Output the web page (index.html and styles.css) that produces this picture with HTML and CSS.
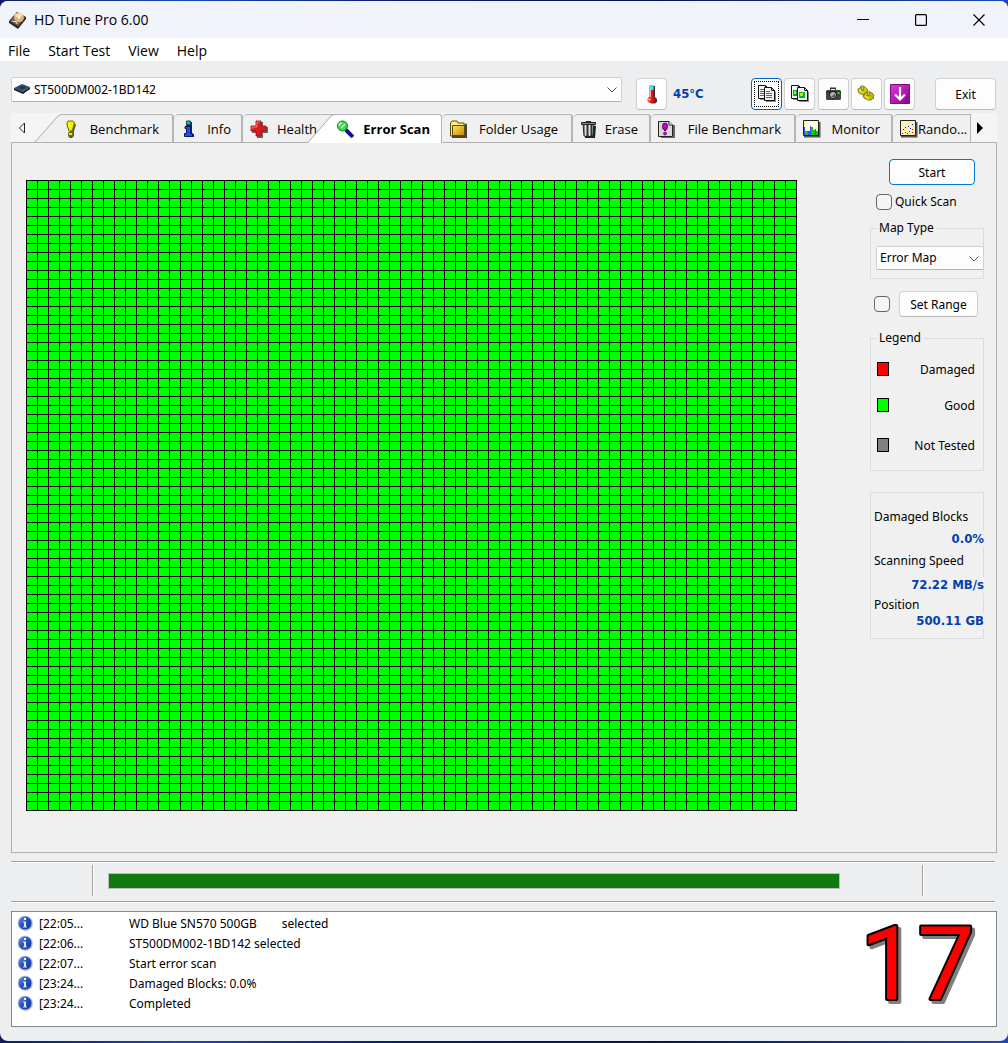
FILE: index.html
```html
<!DOCTYPE html>
<html lang="en">
<head>
<meta charset="utf-8">
<title>HD Tune Pro 6.00</title>
<link rel="stylesheet" href="styles.css">
</head>
<body>
<svg class="defs" aria-hidden="true">
  <defs>
    <linearGradient id="ball" x1="0" y1="0" x2="1" y2="1"><stop offset="0" stop-color="#6f97ee"/><stop offset=".5" stop-color="#2450c0"/><stop offset="1" stop-color="#16308c"/></linearGradient>
    <linearGradient id="purple" x1="0" y1="0" x2="1" y2="1"><stop offset="0" stop-color="#dc3cdc"/><stop offset="1" stop-color="#8c008c"/></linearGradient>
    <linearGradient id="gold" x1="0" y1="0" x2="1" y2="1"><stop offset="0" stop-color="#ffe860"/><stop offset="1" stop-color="#c08a00"/></linearGradient>
    <linearGradient id="tube" x1="0" y1="0" x2="1" y2="0"><stop offset="0" stop-color="#ff4030"/><stop offset="1" stop-color="#c00000"/></linearGradient>
    <symbol id="info-ball" viewBox="0 0 16 16"><circle cx="8.500" cy="8.700" r="7.200" fill="#b4b4bc"/><circle cx="8" cy="8" r="7" fill="url(#ball)" stroke="#c4cae0" stroke-width=".8"/><path d="M7 3h2v2H7z" fill="#fff"/><path d="M6 6.500h3V12H7V7.500H6z" fill="#e8ecfa"/><path d="M6 11.500h4v1H6z" fill="#c8d2f2"/></symbol>
    <symbol id="sheet" viewBox="0 0 12 15"><path d="M2 2h7l3 3v10H2z" fill="#888"/><path d="M.5.5h7l3 3v10H.5z" fill="#f5f5f5" stroke="#111"/><path d="M7.500.5v3h3" fill="none" stroke="#111"/></symbol>
  </defs>
</svg>
<main class="window">
  <header class="titlebar">
    <svg class="app-icon" viewBox="0 0 18 18"><path d="m0 10 8-9 9 5v2l-8 10-9-6z" fill="#2c2a2a"/><path d="m1 10 7-8 8 4-7 9z" fill="#6b6562"/><ellipse cx="10" cy="6.500" rx="5" ry="4.800" fill="#e6ae66"/><path d="M5.500 5c2-4 7-3.500 8.500-1L10 7z" fill="#f9dfb4"/><circle cx="10" cy="6.500" r="1.400" fill="#fff"/><path d="m3.500 10.500 3 0 2 2.500" stroke="#ddd" stroke-width="1.200" fill="none"/></svg>
    <h1 class="title">HD Tune Pro 6.00</h1>
    <button class="caption" aria-label="Minimize"><svg viewBox="0 0 12 12"><path d="M0 5.500h12" stroke="#000"/></svg></button>
    <button class="caption" aria-label="Maximize"><svg viewBox="0 0 12 12"><rect x=".6" y=".6" width="10.800" height="10.800" rx="1" fill="none" stroke="#000" stroke-width="1.200"/></svg></button>
    <button class="caption" aria-label="Close"><svg viewBox="0 0 12 12"><path d="m.5.5 11 11M11.500.5l-11 11" stroke="#000" stroke-width="1.100"/></svg></button>
  </header>
  <nav class="menubar">
    <button>File</button><button>Start Test</button><button>View</button><button>Help</button>
  </nav>

  <div class="toolbar">
    <div class="combo drive">
      <svg class="drive-icon" viewBox="0 0 16 10"><path d="m0 4 8-4 8 3-7 5z" fill="#34506c"/><path d="m0 4 9 4 7-5v2l-7 5-9-4z" fill="#101820"/><path d="m4 4 4-2 4 1-3 2z" fill="#17355c"/></svg>
      <select aria-label="Drive"><option>ST500DM002-1BD142</option></select>
      <svg class="chevron" viewBox="0 0 10 6"><path d="m.5.5 4.500 4.500L9.500.5" fill="none" stroke="#555"/></svg>
    </div>
    <button class="tool temp" aria-label="Temperature"><svg viewBox="0 0 20 20"><path d="M9 2h4v11l2 2v3l-2 1.500H9z" fill="#333"/><path d="M7.500 1.500h4v11l2 2v2.500l-2 2h-4l-2-2v-2.500l2-2z" fill="url(#tube)"/><path d="M7.500 1.500h4V6h-4z" fill="#58dce4"/><path d="M8.500 6v7" stroke="#ffb0a8"/><path d="M6.500 15.500h2" stroke="#fff" stroke-width="1.500"/></svg></button>
    <output class="degrees">45°C</output>
    <div class="tools">
      <button class="tool focused" aria-label="Copy text"><svg viewBox="0 0 20 20"><use href="#sheet" x="1" y="1" width="12" height="15"/><path d="M3 5.500h4M3 7.500h5M3 9.500h5M3 11.500h5" stroke="#0878d8"/><use href="#sheet" x="7" y="3" width="12" height="15"/><path d="M9 7.500h4M9 9.500h6M9 11.500h6M9 13.500h6" stroke="#0878d8"/></svg></button>
      <button class="tool" aria-label="Copy image"><svg viewBox="0 0 20 20"><use href="#sheet" x="1" y="1" width="12" height="15"/><path d="M3 6h4v6H3z" fill="#00a838"/><path d="M4 7h2v3H4z" fill="#e7d300"/><use href="#sheet" x="7" y="3" width="12" height="15"/><path d="M9 8h6v6H9z" fill="#00b83c"/><path d="M10 9h3v3h-3z" fill="#f0d800"/><path d="M13 11h1v2h-1z" fill="#1676d2"/></svg></button>
      <button class="tool" aria-label="Save screenshot"><svg viewBox="0 0 20 20"><path d="M7 3.500h6V7h-1V5H8v2H7z" fill="#333"/><rect x="3" y="6" width="15" height="10" rx="1.500" fill="#444"/><path d="M3 8h15" stroke="#222"/><circle cx="10" cy="11" r="3.500" fill="#bbb" stroke="#111"/><path d="m8 13 4-3.500V13z" fill="#555"/><path d="M14.500 8h2v2h-2z" fill="#0f0"/></svg></button>
      <button class="tool" aria-label="Options"><svg viewBox="0 0 20 20"><g stroke="#6c6500" stroke-width=".8"><path d="m2 5 2-1 1-2 2 0 2 1 1 1 2 2-1 2 0 1-2 1-2 1-2-1-2-1-1-2z" fill="#d0ca00"/><path d="m8 11 1-2 2-1 3 0 2 1 2 2-1 2 1 1-2 1-1 1-3 0-2-1-2-1-1-2z" fill="#c4bb00"/></g><path d="m3 6 3 2M9 12l4 3" stroke="#f6ee50" stroke-width="1.500"/><path d="M6.500 2v5M12.500 7v5" stroke="#777" stroke-width="2.500"/><path d="M6.500 2v4M12.500 7v4" stroke="#c4c08a"/></svg></button>
      <button class="tool" aria-label="Save"><svg viewBox="0 0 20 20"><path d="M.5.5h19v19H.5z" fill="url(#purple)" stroke="#76107b"/><path d="M10 3v12M5 10.500l5 5 5-5" fill="none" stroke="#fff" stroke-width="2.200"/></svg></button>
    </div>
    <button class="btn exit">Exit</button>
  </div>

  <div class="tabs">
    <button class="scroll" aria-label="Scroll tabs left"><svg viewBox="0 0 8 12"><path d="M6.500 1v10l-5-5z" fill="#fff" stroke="#222"/></svg></button>
    <button class="tab lead w-benchmark">
      <svg class="slant" viewBox="0 0 27 28" preserveAspectRatio="none"><path d="M0 28 23 2q2-1.500 4-1.500V28z" fill="#f0f0f0"/><path d="M0 28 23 2q2-1.500 4-1.500" fill="none" stroke="#aaa"/></svg>
      <svg class="icon" viewBox="0 0 18 18"><path d="M7 2h5l2 3-2 6v5l-2 2H8l-2-2v-2l2-2-3-6z" fill="#555"/><path d="m6 1 5 0 1.500 2-1.500 5-1 3H7L5 5V3z" fill="#f4ed00" stroke="#777100"/><path d="M6.500 12.500h4v3h-4z" fill="#eee600" stroke="#777100"/><path d="M7.500 2.500v4" stroke="#fff"/></svg>
      <span>Benchmark</span></button>
    <button class="tab w-info">
      <svg class="icon" viewBox="0 0 18 18"><path d="M6 2h5v4l0 1v7h2v3H4v-3h2V9H4z" fill="#222"/><path d="M5.500 1h4v3.500h-4z" fill="#12aaf0" stroke="#155"/><path d="M4 6.500h5.500v7h2v3H3.500v-3h2v-5H4z" fill="#1450f0" stroke="#0a1a66"/></svg>
      <span>Info</span></button>
    <button class="tab w-health">
      <svg class="icon" viewBox="0 0 18 18"><path d="M7 2h6v5h5v6h-5v5H7v-5H2V7h5z" fill="#666"/><path d="M6 1h5v5h5v5h-5v5H6v-5H1V6h5z" fill="#d81e1e" stroke="#8e1010" stroke-width=".8"/><path d="M7 2h3M7 2v5H2v2" stroke="#ff7a70" fill="none"/></svg>
      <span>Health</span></button>
    <button class="tab active w-scan">
      <svg class="slant" viewBox="0 0 27 29" preserveAspectRatio="none"><path d="M0 29 23 2q2-1.500 4-1.500V29z" fill="#fff"/><path d="M0 28.500 23 2q2-1.500 4-1.500" fill="none" stroke="#aaa"/></svg>
      <svg class="icon" viewBox="0 0 18 18"><path d="m10 10 7 7" stroke="#333" stroke-width="4"/><path d="m9.500 9.500 6.500 6.500" stroke="#0808b8" stroke-width="3"/><circle cx="6.500" cy="6" r="5" fill="#38d848" stroke="#167a22"/><path d="M3 6c0-2 1-3 3-3M5 8l4-4" stroke="#c8ffcc" stroke-width="1.500" fill="none"/></svg>
      <span>Error Scan</span></button>
    <button class="tab w-folder">
      <svg class="icon" viewBox="0 0 18 18"><path d="M3 17h14V5l-1-1" stroke="#444" stroke-width="2" fill="none"/><path d="M1.500 16V3L3 1h5l1 2h6v13z" fill="#ffee80" stroke="#604a00"/><path d="M3.500 5.500h12v10h-12z" fill="url(#gold)" stroke="#604a00"/></svg>
      <span>Folder Usage</span></button>
    <button class="tab w-erase">
      <svg class="icon" viewBox="0 0 18 18"><path d="M4 6h12l-1 12H5z" fill="#222"/><path d="M3 4h11l-1 12H4z" fill="#888" stroke="#222"/><path d="M5.500 5v11M9.500 5v11" stroke="#ddd"/><path d="M7.500 5v11M11.500 5v11" stroke="#333"/><path d="M1.500 2.500h14v2h-14zM6 1.500h5" fill="#888" stroke="#222"/></svg>
      <span>Erase</span></button>
    <button class="tab w-file">
      <svg class="icon" viewBox="0 0 18 18"><path d="M3 17.500h13V5" fill="none" stroke="#666" stroke-width="2"/><path d="M.5 1.500H11l3.500 3.500v11.500H.5z" fill="#d8d8d8" stroke="#222"/><path d="M11 1.500V5h3.500" fill="#fff" stroke="#222"/><ellipse cx="7" cy="6.500" rx="2.500" ry="3.500" fill="#d000d0" stroke="#600060"/><path d="M7 9v2" stroke="#600060" stroke-width="2"/><circle cx="7" cy="13.500" r="1.500" fill="#d000d0" stroke="#600060" stroke-width=".7"/></svg>
      <span>File Benchmark</span></button>
    <button class="tab w-monitor">
      <svg class="icon" viewBox="0 0 18 18"><path d="M1 16.500h15.500V2" fill="none" stroke="#555" stroke-width="2"/><path d="M.5.500h15v15H.5z" fill="#fffcd8" stroke="#222"/><path d="M1 7h1v8H1zM5 11h2v4H5zM7 6h1v9H7zM12 9h1v6h-1z" fill="#3050ff"/><path d="M2 11h3v4H2zM8 7h2v8H8zM10 10h2v5h-2zM13 11h2v4h-2z" fill="#10c810"/></svg>
      <span>Monitor</span></button>
    <button class="tab clipped w-random">
      <svg class="icon" viewBox="0 0 18 18"><path d="M1 16.500h15.500V2" fill="none" stroke="#555" stroke-width="2"/><path d="M.5.500h15v15H.5z" fill="#fff0b8" stroke="#222"/><path d="M3 9.500h1M5 7.500h1M8 6.500h1M12 4.500h1M10 8.500h1" stroke="#0010e0"/><path d="M2 13.500h1M5 12.500h1M7 13.500h1M9 11.500h1M12 9.500h1M12 12.500h1" stroke="#e00000"/></svg>
      <span>Rando...</span></button>
    <button class="scroll" aria-label="Scroll tabs right"><svg viewBox="0 0 8 12"><path d="M1 0v12l6-6z" fill="#000"/></svg></button>
  </div>

  <section class="panel">
    <div class="block-map" role="img" aria-label="Error map, all blocks good"></div>
    <aside class="side">
      <button class="btn start">Start</button>
      <label class="quick"><input type="checkbox">Quick Scan</label>
      <fieldset class="group map-type">
        <legend>Map Type</legend>
        <div class="combo">
          <select aria-label="Map Type"><option>Error Map</option></select>
          <svg class="chevron" viewBox="0 0 10 6"><path d="m.5.5 4.500 4.500L9.500.5" fill="none" stroke="#555"/></svg>
        </div>
      </fieldset>
      <div class="range"><input type="checkbox" aria-label="Use range"><button class="btn">Set Range</button></div>
      <fieldset class="group legend-box">
        <legend>Legend</legend>
        <ul class="keys">
          <li><i class="swatch damaged"></i>Damaged</li>
          <li><i class="swatch good"></i>Good</li>
          <li><i class="swatch untested"></i>Not Tested</li>
        </ul>
      </fieldset>
      <dl class="stats">
        <dt>Damaged Blocks</dt><dd>0.0%</dd>
        <dt>Scanning Speed</dt><dd>72.22 MB/s</dd>
        <dt>Position</dt><dd>500.11 GB</dd>
      </dl>
    </aside>
  </section>

  <div class="status">
    <div class="cell"></div>
    <progress max="100" value="100" aria-label="Scan progress"></progress>
    <div class="cell end"></div>
  </div>

  <section class="log">
    <table>
      <tr><td class="mark"><svg><use href="#info-ball"/></svg></td><td class="time">[22:05...</td><td class="message">WD Blue SN570 500GB        selected</td></tr>
      <tr><td class="mark"><svg><use href="#info-ball"/></svg></td><td class="time">[22:06...</td><td class="message">ST500DM002-1BD142 selected</td></tr>
      <tr><td class="mark"><svg><use href="#info-ball"/></svg></td><td class="time">[22:07...</td><td class="message">Start error scan</td></tr>
      <tr><td class="mark"><svg><use href="#info-ball"/></svg></td><td class="time">[23:24...</td><td class="message">Damaged Blocks: 0.0%</td></tr>
      <tr><td class="mark"><svg><use href="#info-ball"/></svg></td><td class="time">[23:24...</td><td class="message">Completed</td></tr>
    </table>
    <svg class="number" viewBox="0 0 130 112"><text x="4" y="85">17</text></svg>
  </section>
</main>
</body>
</html>
```
FILE: styles.css
```css
* { box-sizing: border-box; }
body {
  margin: 0;
  min-height: 100vh;
  padding: 1px 0 2px;
  display: flex;
  background: linear-gradient(90deg, #101c60, #1748b4 18%, #0a1a70 40%, #081450 65%, #1b49b8);
  font: 12px/16px "Noto Sans", sans-serif;
  color: #000;
}
button, select, input { font: inherit; color: inherit; margin: 0; }
button { padding: 0; border: 0; background: none; }
svg { display: block; }
.defs { position: absolute; width: 0; height: 0; }

.window {
  flex: 1;
  min-width: 0;
  display: flex;
  flex-direction: column;
  border-radius: 8px;
  overflow: hidden;
  background: #edeef0;
}
.titlebar {
  height: 37px;
  display: flex;
  align-items: center;
  padding: 0 0 0 9px;
  background: #f0f3fa;
}
.app-icon { width: 18px; height: 18px; margin-right: 7px; }
.title { flex: 1; margin: 0; font: 14px/20px "Open Sans", sans-serif; }
.caption { width: 58px; height: 37px; display: flex; align-items: center; justify-content: center; }
.caption svg { width: 12px; height: 12px; }
.menubar {
  height: 23px;
  display: flex;
  gap: 18px;
  padding: 2px 8px 0;
  background: #fff;
}
.menubar button { font: 14px/20px "Open Sans", sans-serif; }

.toolbar { display: flex; align-items: flex-start; padding: 16px 12px 3px 11px; }
.combo { position: relative; display: flex; }
.combo select {
  appearance: none;
  width: 100%;
  height: 24px;
  padding: 0 22px 0 3px;
  border: 1px solid #d0d0d0;
  border-bottom-color: #b4b4b4;
  border-radius: 2px;
  background: #fdfdfd;
}
.combo .chevron { position: absolute; right: 5px; top: 10px; width: 10px; height: 6px; }
.drive { flex: 1; }
.drive select { height: 25px; padding-left: 22px; }
.drive-icon { position: absolute; left: 3px; top: 7px; width: 16px; height: 10px; }
.tool, .btn {
  border: 1px solid #d0d0d0;
  border-bottom-color: #b8b8b8;
  border-radius: 4px;
  background: #fdfdfd;
}
.tool { width: 31px; height: 32px; margin-top: 1px; display: flex; align-items: center; justify-content: center; }
.tool svg { width: 20px; height: 20px; }
.temp { margin-left: 14px; }
.degrees {
  width: 84px;
  padding: 9px 0 0 6px;
  font: bold 13px/16px "DejaVu Sans Condensed", "DejaVu Sans", sans-serif;
  color: #0040b0;
}
.tools { display: flex; justify-content: space-between; width: 164px; margin-right: 20px; }
.focused { border: 1px solid #0067c0; outline: 1px dotted #000; outline-offset: -4px; }

.tabs {
  height: 29px;
  margin: 0 11px;
  padding-top: 1px;
  display: flex;
  background: #f5f5f5;
  font: 13px/18px "Open Sans", sans-serif;
}
.scroll { width: 24px; flex: none; display: flex; align-items: center; padding-left: 7px; }
.scroll svg { width: 8px; height: 12px; }
.scroll:last-child { width: 22px; padding-left: 5px; }
.tab {
  position: relative;
  flex: none;
  display: flex;
  align-items: center;
  justify-content: space-between;
  padding: 0 13px 0 7px;
  border-top: 1px solid #b4b4b4;
  border-right: 2px solid #b4b4b4;
  border-radius: 5px 3px 0 0;
  background: #f0f0f0;
}
.tab .icon { width: 18px; height: 18px; flex: none; }
.slant { position: absolute; left: -27px; top: -1px; width: 27px; height: 28px; }
.lead { margin-left: 27px; padding-left: 0; border-top-left-radius: 0; }
.active {
  z-index: 1;
  margin-bottom: -1px;
  padding: 0 11px 0 1px;
  border-right-width: 1px;
  border-top-left-radius: 0;
  background: #fff;
  font-weight: bold;
}
.active .slant { height: 29px; }
.clipped { padding: 0 4px 0 7px; border-right-width: 1px; border-top-right-radius: 0; }
.w-benchmark { width: 112px; }
.w-info { width: 69px; padding-right: 10px; }
.w-health { width: 92px; padding-right: 16px; }
.w-scan { width: 107px; }
.w-folder { width: 131px; }
.w-erase { width: 78px; padding-right: 11px; }
.w-file { width: 145px; }
.w-monitor { width: 97px; padding-right: 11px; }
.w-random { width: 78px; }

.panel {
  flex: 1;
  margin: 0 11px;
  padding: 16px 12px 40px 14px;
  display: flex;
  justify-content: space-between;
  align-items: flex-start;
  border: 1px solid #b0b0b0;
  background: #f0f0f0;
}
/* 70 x 70 blocks, each 11 x 9 pixels, plus the closing line */
.block-map {
  width: 771px;
  height: 631px;
  margin-top: 21px;
  background:
    linear-gradient(90deg, #000 1px, transparent 1px) 0 0 / 11px 9px,
    linear-gradient(#000 1px, #00ff00 1px) 0 0 / 11px 9px;
}
.side { width: 114px; display: flex; flex-direction: column; }
.btn { height: 26px; padding-top: 1px; }
.exit { width: 61px; height: 32px; margin-top: 1px; }
.start { width: 86px; margin-left: 19px; border-color: #0078d4; }
.quick { display: flex; align-items: center; gap: 3px; margin: 9px 0 10px 6px; }
input[type="checkbox"] {
  appearance: none;
  width: 16px;
  height: 16px;
  border: 1px solid #666;
  border-radius: 4px;
  background: #f5f5f5;
}
.group { min-width: 0; margin: 0; border: 1px solid #dcdcdc; padding: 0; }
.group legend { margin-left: 5px; padding: 0 3px; line-height: 16px; }
.map-type { height: 59px; }
.map-type .combo { margin: 10px -1px 0 5px; }
.range { display: flex; align-items: center; gap: 9px; margin: 12px 0 13px 4px; }
.range .btn { width: 79px; }
.legend-box { height: 141px; }
.keys { list-style: none; margin: 0; padding: 16px 8px 0 6px; }
.keys li { display: flex; justify-content: space-between; margin-bottom: 20px; }
.keys li:last-child { padding-top: 4px; }
.swatch { width: 12px; height: 14px; border: 1px solid #000; }
.damaged { background: #ff0000; }
.good { background: #00ff00; }
.untested { background: #808080; }
.stats {
  height: 147px;
  margin: 21px 0 0;
  padding: 16px 0 0 3px;
  border: 1px solid #dcdcdc;
}
.stats dd {
  width: fit-content;
  margin: 6px -1px 6px auto;
  font: bold 13px/16px "DejaVu Sans Condensed", "DejaVu Sans", sans-serif;
  color: #0040b0;
  background: #f0f0f0;
}
.stats dd:nth-of-type(2) { margin: 8px -1px 4px auto; }
.stats dd:last-child { margin-top: 0; }

.status {
  height: 41px;
  margin: 8px 13px 9px 11px;
  padding-top: 3px;
  display: flex;
  align-items: flex-start;
  border-top: 1px solid #a0a0a0;
  border-bottom: 1px solid #a0a0a0;
  box-shadow: 0 1px #fff, inset 0 1px #fff;
}
.cell { width: 82px; height: 31px; border-right: 1px solid #a0a0a0; box-shadow: 1px 0 #fff; }
.end { width: 73px; border-right: 0; border-left: 1px solid #a0a0a0; box-shadow: inset 1px 0 #fff; }
progress {
  appearance: none;
  flex: 1;
  height: 16px;
  margin: 8px 82px 0 15px;
  border: 1px solid #bcbcbc;
}
progress::-webkit-progress-bar { background: #e6e6e6; }
progress::-webkit-progress-value { background: #0f7b0f; }

.log {
  height: 116px;
  margin: 0 11px 14px;
  padding: 2px 0 0 5px;
  display: flex;
  justify-content: space-between;
  align-items: flex-start;
  border: 1px solid #828790;
  background: #fff;
}
.log table { border-collapse: collapse; }
.log td { height: 20px; padding: 0; }
.mark svg { width: 16px; height: 16px; margin-bottom: 2px; }
.mark { width: 22px; }
.time { width: 90px; }
.message { white-space: pre; }
.number {
  width: 130px;
  height: 112px;
  margin-right: 10px;
  font: 102px Roboto, sans-serif;
  fill: #ff0000;
  stroke: #000;
  stroke-width: 4px;
  stroke-linejoin: round;
  paint-order: stroke fill;
  filter: drop-shadow(3px 3px 0 #808080);
}
```
